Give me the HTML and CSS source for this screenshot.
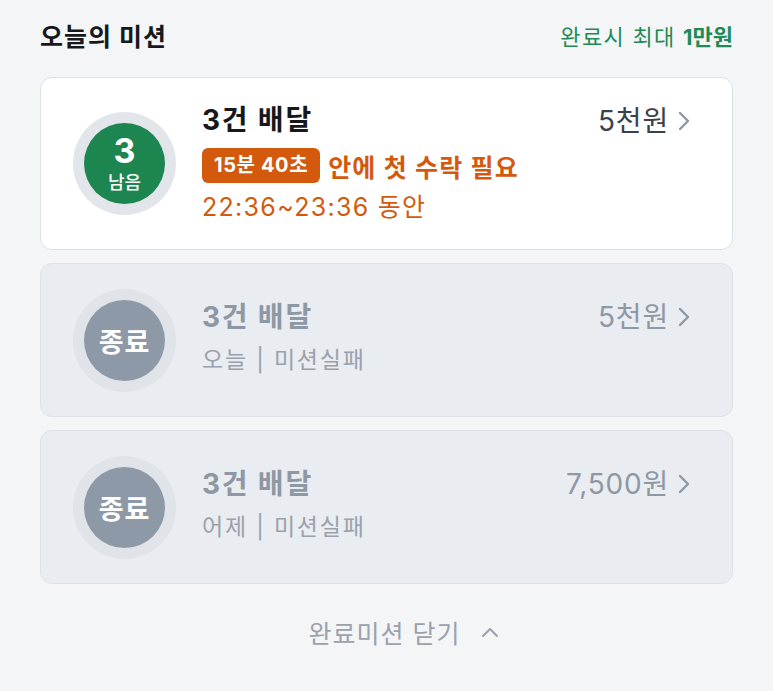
FILE: index.html
```html
<!DOCTYPE html>
<html lang="ko">

<head>
    <meta charset="UTF-8">
    <meta name="viewport" content="width=device-width, initial-scale=1.0">
    <title>오늘의 미션</title>
    <link rel="stylesheet" href="styles.css">
</head>

<body>
    <div class="mission-page">
        <div class="mission-header">
            <h1 class="mission-title">오늘의 미션</h1>
            <div class="mission-reward">완료시 최대 <strong>1만원</strong></div>
        </div>

        <div class="mission-list">
            <div class="mission-card active">
                <div class="mission-ring">
                    <div class="mission-badge green">
                        <span class="badge-count">3</span>
                        <span class="badge-label">남음</span>
                    </div>
                </div>
                <div class="mission-info">
                    <div class="mission-name">3건 배달</div>
                    <div class="mission-timer">
                        <span class="timer-box">15분 40초</span>
                        <span class="timer-text">안에 첫 수락 필요</span>
                    </div>
                    <div class="mission-time">22:36~23:36 동안</div>
                </div>
                <div class="mission-amount">5천원
                    <svg class="chevron" width="12" height="20" viewBox="0 0 12 20"><polyline points="2,2 10,10 2,18" /></svg>
                </div>
            </div>

            <div class="mission-card ended">
                <div class="mission-ring">
                    <div class="mission-badge gray">종료</div>
                </div>
                <div class="mission-info">
                    <div class="mission-name">3건 배달</div>
                    <div class="mission-status">오늘 | 미션실패</div>
                </div>
                <div class="mission-amount">5천원
                    <svg class="chevron" width="12" height="20" viewBox="0 0 12 20"><polyline points="2,2 10,10 2,18" /></svg>
                </div>
            </div>

            <div class="mission-card ended">
                <div class="mission-ring">
                    <div class="mission-badge gray">종료</div>
                </div>
                <div class="mission-info">
                    <div class="mission-name">3건 배달</div>
                    <div class="mission-status">어제 | 미션실패</div>
                </div>
                <div class="mission-amount">7,500원
                    <svg class="chevron" width="12" height="20" viewBox="0 0 12 20"><polyline points="2,2 10,10 2,18" /></svg>
                </div>
            </div>
        </div>

        <div class="mission-toggle">완료미션 닫기
            <svg class="chevron-up" width="18" height="11" viewBox="0 0 18 11"><polyline points="2,9 9,2 16,9" /></svg>
        </div>
    </div>
</body>

</html>
```

FILE: styles.css
```css
body {
    margin: 0;
    background-color: #f4f5f7;
    font-family: Inter, "Noto Sans CJK KR", "Noto Sans", sans-serif;
}

.mission-page {
    padding: 14px 40px 0;
}

.mission-header {
    display: flex;
    justify-content: space-between;
    align-items: center;
    height: 42px;
    margin-bottom: 21px;
}

.mission-title {
    margin: 0;
    font-size: 25px;
    font-weight: 700;
    letter-spacing: 1px;
    color: #16181c;
}

.mission-reward {
    font-size: 22px;
    letter-spacing: 1.3px;
    color: #1f8a55;
}

.mission-reward strong {
    font-weight: 700;
    letter-spacing: 0;
}

.mission-list {
    display: flex;
    flex-direction: column;
    gap: 13px;
}

.mission-card {
    display: flex;
    align-items: center;
    height: 152px;
    padding: 0 42px 0 32px;
    border: 1px solid #dde1e6;
    border-radius: 12px;
    background-color: #e9ecf0;
}

.mission-card.active {
    height: 171px;
    background-color: #ffffff;
}

.mission-ring {
    display: flex;
    align-items: center;
    justify-content: center;
    flex-shrink: 0;
    width: 103px;
    height: 103px;
    border-radius: 50%;
    background-color: #e2e5ea;
}

.ended .mission-ring {
    background-color: #e0e3e8;
}

.mission-badge {
    display: flex;
    flex-direction: column;
    align-items: center;
    justify-content: center;
    width: 81px;
    height: 81px;
    border-radius: 50%;
    color: #ffffff;
    font-weight: 700;
}

.mission-badge.green {
    background-color: #1d8550;
}

.mission-badge.gray {
    background-color: #8e99a7;
    font-size: 27px;
    letter-spacing: 1px;
}

.badge-count {
    font-size: 34px;
    line-height: 34px;
}

.badge-label {
    margin-top: 4px;
    font-size: 18px;
    font-weight: 500;
    line-height: 22px;
}

.mission-info {
    flex: 1;
    margin-left: 26px;
}

.mission-name {
    font-size: 28px;
    font-weight: 700;
    line-height: 36px;
    letter-spacing: 1.8px;
    color: #16181c;
}

.ended .mission-info {
    margin-bottom: 4px;
}

.ended .mission-name {
    color: #8e97a4;
}

.mission-timer {
    display: flex;
    align-items: center;
    margin-top: 10px;
}

.timer-box {
    padding: 0 12px;
    height: 35px;
    line-height: 35px;
    border-radius: 6px;
    background-color: #d35a0c;
    color: #ffffff;
    font-size: 20px;
    font-weight: 700;
    letter-spacing: 0.6px;
}

.timer-text {
    margin-left: 8px;
    font-size: 25px;
    font-weight: 700;
    letter-spacing: 1.2px;
    color: #d35a0c;
}

.mission-time {
    margin-top: 4px;
    font-size: 25px;
    line-height: 38px;
    letter-spacing: 1.3px;
    color: #d35a0c;
}

.mission-status {
    margin-top: 8px;
    font-size: 23px;
    line-height: 34px;
    letter-spacing: 1.8px;
    color: #99a1ac;
}

.mission-amount {
    display: flex;
    align-items: center;
    align-self: flex-start;
    margin-top: 35px;
    font-size: 28px;
    line-height: 36px;
    letter-spacing: 0.8px;
    color: #3b414b;
}

.active .mission-amount {
    margin-top: 25px;
}

.ended .mission-amount {
    color: #8e97a4;
}

.chevron {
    margin-left: 9px;
    fill: none;
    stroke: #8e97a4;
    stroke-width: 2.4;
    stroke-linecap: round;
    stroke-linejoin: round;
}

.mission-toggle {
    display: flex;
    justify-content: center;
    align-items: center;
    margin-top: 30px;
    padding-left: 34px;
    font-size: 25px;
    letter-spacing: 1px;
    color: #9aa1ab;
}

.chevron-up {
    margin-left: 20px;
    fill: none;
    stroke: #9aa1ab;
    stroke-width: 2;
    stroke-linecap: round;
    stroke-linejoin: round;
}
```
